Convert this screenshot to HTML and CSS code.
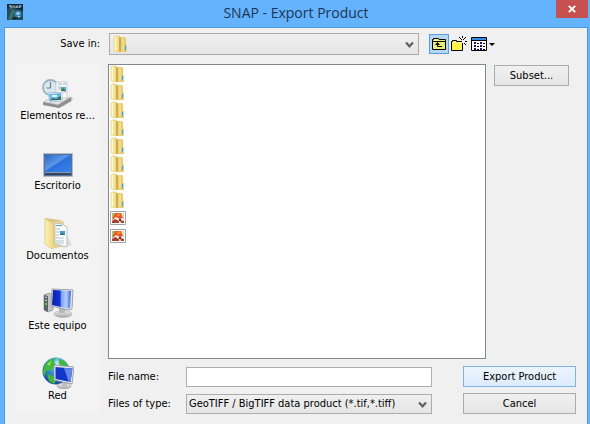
FILE: index.html
```html
<!DOCTYPE html>
<html lang="en">
<head>
<meta charset="utf-8">
<meta name="viewport" content="width=device-width, initial-scale=1">
<title>SNAP - Export Product</title>
<link rel="stylesheet" href="styles.css">
</head>
<body>
<svg class="defs" aria-hidden="true">
  <defs>
    <linearGradient id="gFold" x1="0" x2="1"><stop offset="0" stop-color="#c9a850"/><stop offset=".35" stop-color="#e9d27c"/><stop offset="1" stop-color="#e6cb66"/></linearGradient>
    <linearGradient id="gFlap" x1="0" x2="1"><stop offset="0" stop-color="#fdf3b8"/><stop offset="1" stop-color="#ecd47a"/></linearGradient>
    <linearGradient id="gDesk" x1="0" y1="0" x2="1" y2="1"><stop offset="0" stop-color="#2b68c8"/><stop offset=".45" stop-color="#5b98ea"/><stop offset=".5" stop-color="#2c70dc"/><stop offset="1" stop-color="#3a82ec"/></linearGradient>
    <linearGradient id="gScreen" x1="0" x2="1"><stop offset="0" stop-color="#0a1fa8"/><stop offset=".42" stop-color="#1233d8"/><stop offset=".5" stop-color="#7da2f2"/><stop offset=".75" stop-color="#b9cffa"/><stop offset="1" stop-color="#3462dc"/></linearGradient>
    <linearGradient id="gMetal" x1="0" y1="0" x2="0" y2="1"><stop offset="0" stop-color="#f2f3f3"/><stop offset="1" stop-color="#a0a5a8"/></linearGradient>
    <radialGradient id="gGlobe" cx=".55" cy=".25" r=".8"><stop offset="0" stop-color="#c8f2ff"/><stop offset=".35" stop-color="#3fa0e0"/><stop offset="1" stop-color="#123a94"/></radialGradient>
    <symbol id="folder" viewBox="0 0 16 18">
      <path d="M6 2h6l1 1v13l-1 1H6z" fill="url(#gFold)"/>
      <path d="M1 2l1-1h4l1 1v14l-1 1-5-1z" fill="url(#gFlap)" stroke="#e3ca74" stroke-width=".6"/>
      <path d="M6 2l2 1v13l-2 1z" fill="#cbaa50"/>
      <path d="M2 2h1v13H2z" fill="#fffad2"/>
      <path d="M9 3h2v12H9z" fill="#f0dc8c"/>
      <path d="M11 10h3v6l-1 1h-2z" fill="#e3c765"/>
      <path d="M12 11h1v4h-1z" fill="#3f9fe0"/>
      <path d="M13 11h1v4h-1z" fill="#b9dcef"/>
    </symbol>
    <symbol id="image" viewBox="0 0 16 14">
      <path d="M.5.500h15v13H.5z" fill="#fff" stroke="#a3a3a8"/>
      <path d="M2 2h12v10H2z" fill="#f1eadc"/>
      <path d="M2 2h5L2 9z" fill="#a7c36c"/>
      <path d="M5 2h6l2 5-3 1-4-2-4 3z" fill="#e9502e"/>
      <path d="M6 4l3-2 2 2-3 2z" fill="#f98b25"/>
      <path d="M2 10l3-2 4 2v2H2zM10 9l4 1v2h-3z" fill="#a8402f"/>
      <path d="M9 8h2v2H9z" fill="#6c2c25"/>
      <path d="M12 2h2v6h-1z" fill="#d4dcc0"/>
    </symbol>
    <symbol id="chevron" viewBox="0 0 9 8"><path d="M1 1.500l3.500 3.800L8 1.500" fill="none" stroke="#606060" stroke-width="2.200"/></symbol>
  </defs>
</svg>
<div class="dialog">
  <header class="titlebar">
    <svg class="app-icon" viewBox="0 0 16 16" aria-hidden="true">
      <path d="M0 0h16v16H0z" fill="#122b3c"/>
      <path d="M0 5l7-1 9 3v9H0z" fill="#234e5d"/>
      <path d="M1 15L5 5l3 1-3 10z" fill="#3c7162"/>
      <circle cx="11" cy="10" r="3.500" fill="#3682bb"/>
      <path d="M9 9l3-1 1 2-3 1zM11 12h2v1h-2z" fill="#b5d9e7"/>
      <path d="M5 14l4-1 2 2H5z" fill="#10202e"/>
      <path d="M4.500 1.500h-2v1h2v1.500h-2M6 4V1.500L8 4V1.500M9.500 4V2h1.500v2M9.500 3H11M12.500 4V1.500h1.500V3h-1.500" fill="none" stroke="#a9c2cc" stroke-width=".8"/>
    </svg>
    <h1 class="title">SNAP - Export Product</h1>
    <button class="close" type="button" aria-label="Close">
      <svg class="close-icon" viewBox="0 0 8 8" aria-hidden="true"><path d="M.8.800l6.400 6.400M7.200.800L.8 7.200" stroke="#fff" stroke-width="1.900"/></svg>
    </button>
  </header>
  <main class="content">
    <div class="location">
      <label class="location-label" for="dir">Save in:</label>
      <div class="combo combo-dir">
        <select id="dir"><option value=""></option></select>
        <svg class="combo-folder" aria-hidden="true"><use href="#folder"/></svg>
        <svg class="chevron" aria-hidden="true"><use href="#chevron"/></svg>
      </div>
      <div class="tools">
        <button class="tool tool-active" type="button" aria-label="Up one level">
          <svg class="tool-icon" viewBox="0 0 16 16" aria-hidden="true">
            <path d="M1.500 13.500v-10h1v-1h5v1h7v10z" fill="#e9ee72" stroke="#000"/>
            <path d="M2 5.500h12" stroke="#000"/><path d="M3 4h5" stroke="#fffbc0"/>
            <path d="M6.500 7v3.500H11" fill="none" stroke="#000"/><path d="M4 9l2.500-3L9 9z"/>
          </svg>
        </button>
        <button class="tool" type="button" aria-label="Create new folder">
          <svg class="tool-icon" viewBox="0 0 16 16" aria-hidden="true">
            <path d="M.5 14.500v-9h1v-1h4v1h6v9z" fill="#fdf543" stroke="#000"/>
            <path d="M1 7h10" stroke="#fffcae"/>
            <path d="M11 3h3v4h-3z" fill="#f0f0f0"/>
            <path d="M9 5.500H7M16 5.500h-2M11.500 0v2M11.500 7v3M8 1.500h1M9 2.500h1M14 1.500h1M13 2.500h1M13 7.500h1M14 8.500h1M10 3.500h1M12 3.500h1" stroke="#000"/>
          </svg>
        </button>
        <button class="tool tool-menu" type="button" aria-label="View menu">
          <svg class="view-icon" viewBox="0 0 24 16" aria-hidden="true">
            <path d="M.5 1.500h15v13H.5z" fill="#fff" stroke="#000"/><path d="M1 2h14v2H1z" fill="#2f8dec"/><path d="M1 4.500h14" stroke="#000"/>
            <path d="M3 6h2v2H3zM3 9h2v2H3zM3 12h2v2H3zM9 6h2v2H9zM9 9h2v2H9zM9 12h2v2H9z" fill="#17176b"/>
            <path d="M6 7.500h2M6 10.500h2M6 13.500h2M12 7.500h2M12 10.500h2M12 13.500h2" stroke="#000"/>
            <path d="M18 7h6l-3 3z"/>
          </svg>
        </button>
      </div>
    </div>
    <div class="columns">
      <nav class="places" aria-label="Places">
        <button class="place" type="button">
          <svg class="place-icon" viewBox="0 0 32 32" aria-hidden="true">
            <path d="M14 28l16-8 2 2-11 8z" fill="#dcdcdc"/>
            <path d="M1 25l10-6 19 1v4L17 31 1 28z" fill="#c5c7c6"/>
            <path d="M1 25l15 3 13-8v4l-12 7-16-3z" fill="#8d9090"/>
            <path d="M3 25l10-6 15 1-12 7z" fill="#e7e8e7"/>
            <circle cx="8.500" cy="10.500" r="7.500" fill="#d8e8f0" stroke="#9fb2bf" stroke-width="1.800"/>
            <path d="M8.500 5v6h-4" fill="none" stroke="#688293" stroke-width="1.200"/>
            <path d="M14 5h11v16H14z" fill="#fafafa" stroke="#b6bbbc" stroke-width=".7"/>
            <path d="M16 7h4M21 7h3M16 10h3M16 12h3M21 15h3" stroke="#9fabae"/>
            <path d="M19 10h5v4h-5z" fill="#54a5ce"/><path d="M19 13l2-2 3 3h-5z" fill="#3b7b4c"/>
            <path d="M6 16l14-1v9l-12 1z" fill="#fff" stroke="#91aabd" stroke-width=".7"/>
            <path d="M7 17l12-1v7L8 24z" fill="#69b4ec"/><path d="M8 23l3-2 3 1 5-3v4z" fill="#327451"/><path d="M10 19h5" stroke="#e5f6ff" stroke-width="2"/>
          </svg>
          <span class="place-name">Elementos re...</span>
        </button>
        <button class="place" type="button">
          <svg class="place-icon" viewBox="0 0 32 32" aria-hidden="true">
            <path d="M1.500 6.500h29v23h-29z" fill="#56729b" stroke="#b4bac3"/>
            <path d="M3 8h26v17H3z" fill="url(#gDesk)"/><path d="M3 25h26v3H3z" fill="#35445a"/><path d="M3 25.500h26" stroke="#8c9db1"/>
          </svg>
          <span class="place-name">Escritorio</span>
        </button>
        <button class="place" type="button">
          <svg class="place-icon" viewBox="0 0 32 32" aria-hidden="true">
            <path d="M20 31l10-3-5-10z" fill="#dedede"/>
            <path d="M3 1l15 2 4 2v24l-9 2z" fill="#dcc57e"/>
            <path d="M9 5l11-1 2 2v22l-10 2z" fill="#e7d89d"/>
            <path d="M13 6l7 1 5 3v20l-12-3z" fill="#f7fbfc" stroke="#a7b2b8" stroke-width=".7"/>
            <path d="M14 8h6v1h-6z" fill="#55a2b2"/>
            <path d="M14 12h4M14 15h3M14 18h3M14 21h8M14 24h8M14 26h8" stroke="#b3c5ce"/>
            <path d="M18 14h5v4h-5z" fill="#4c99c8"/><path d="M18 18l2-2 3 2z" fill="#326b52"/>
            <path d="M3 2l8 4 1 25-2 1-7-5z" fill="url(#gFlap)" stroke="#ddc570" stroke-width=".7"/>
          </svg>
          <span class="place-name">Documentos</span>
        </button>
        <button class="place" type="button">
          <svg class="place-icon" viewBox="0 0 32 32" aria-hidden="true">
            <path d="M2 8l5-2 4 2v15l-5 2-4-2z" fill="#bfc3c5" stroke="#858b8e" stroke-width=".7"/>
            <path d="M2 8l4 1v16l-4-2z" fill="#5c6365"/><path d="M3 10l2 .5M3 13l2 .5" stroke="#d6dbdd"/><path d="M3 16h2v2H3z" fill="#57d53d"/>
            <ellipse cx="21" cy="27" rx="9" ry="3.500" fill="url(#gMetal)" stroke="#b1b4b6" stroke-width=".7"/>
            <path d="M17 20h6v6h-6z" fill="#b3b8bb"/>
            <path d="M10 2l21 1-1 19-4 1-17-4z" fill="#e4e6e8" stroke="#898f98" stroke-width=".8"/>
            <path d="M11 3l18 1-1 17-3 .5L10 18z" fill="url(#gScreen)"/>
          </svg>
          <span class="place-name">Este equipo</span>
        </button>
        <button class="place" type="button">
          <svg class="place-icon" viewBox="0 0 32 32" aria-hidden="true">
            <circle cx="14" cy="14" r="13.500" fill="url(#gGlobe)"/>
            <path d="M2 9l5-6 7-2-2 4 2 3-5 5-5 1-1 5-2-3zM17 2l6 2 3 5-5 1-4-3zM5 17l6 2 3 5-2 3-5-3z" fill="#43b83d"/>
            <path d="M5 7l4-3-1 5z" fill="#93e361"/>
            <ellipse cx="22" cy="29" rx="7" ry="3" fill="url(#gMetal)" stroke="#a5a9ad" stroke-width=".6"/>
            <path d="M20 24h5v5h-5z" fill="#bdc1c4"/>
            <path d="M12 8l20 2-2 17-18-4z" fill="#e8eaec" stroke="#8a9098" stroke-width=".8"/>
            <path d="M13.500 10l17 1.500-2 13.500-15-3z" fill="#1237c8"/><path d="M22 11l8.500.5-2 13.500-2-.5z" fill="#5f88e8"/>
          </svg>
          <span class="place-name">Red</span>
        </button>
      </nav>
      <div class="main">
        <div class="browser">
          <ul class="files" aria-label="Files">
            <li class="file"><svg class="file-icon" aria-hidden="true"><use href="#folder"/></svg></li>
            <li class="file"><svg class="file-icon" aria-hidden="true"><use href="#folder"/></svg></li>
            <li class="file"><svg class="file-icon" aria-hidden="true"><use href="#folder"/></svg></li>
            <li class="file"><svg class="file-icon" aria-hidden="true"><use href="#folder"/></svg></li>
            <li class="file"><svg class="file-icon" aria-hidden="true"><use href="#folder"/></svg></li>
            <li class="file"><svg class="file-icon" aria-hidden="true"><use href="#folder"/></svg></li>
            <li class="file"><svg class="file-icon" aria-hidden="true"><use href="#folder"/></svg></li>
            <li class="file"><svg class="file-icon" aria-hidden="true"><use href="#folder"/></svg></li>
            <li class="file"><svg class="file-image" aria-hidden="true"><use href="#image"/></svg></li>
            <li class="file"><svg class="file-image" aria-hidden="true"><use href="#image"/></svg></li>
          </ul>
          <div class="side"><button class="btn" type="button">Subset...</button></div>
        </div>
        <form class="form">
          <label for="name">File name:</label>
          <input class="name" id="name" type="text">
          <button class="btn btn-primary" type="button">Export Product</button>
          <label for="type">Files of type:</label>
          <div class="combo combo-type">
            <select id="type"><option>GeoTIFF / BigTIFF data product (*.tif,*.tiff)</option></select>
            <svg class="chevron" aria-hidden="true"><use href="#chevron"/></svg>
          </div>
          <button class="btn" type="button">Cancel</button>
        </form>
      </div>
    </div>
  </main>
</div>
</body>
</html>
```
FILE: styles.css
```css
* { box-sizing: border-box; }

body {
  margin: 0;
  color: #000;
  font: 11px/14px Tahoma, "DejaVu Sans Condensed", "Noto Sans", sans-serif;
}

button, input, select {
  margin: 0;
  padding: 0;
  border: 0;
  border-radius: 0;
  background: none;
  color: inherit;
  font: inherit;
}

svg { display: block; }
.defs { position: absolute; width: 0; height: 0; }

.dialog {
  display: flex;
  flex-direction: column;
  min-height: 100vh;
  padding: 0 2px 0 4px;
  background: #64b3ff;
}

.titlebar {
  display: grid;
  grid-template-columns: 32px 1fr 32px;
  align-items: start;
  height: 27px;
}
.app-icon { width: 16px; height: 16px; margin: 4px 3px; }
.title {
  margin: 0;
  color: #1c3550;
  font: 14px/26px "Open Sans", sans-serif;
  text-align: center;
}
.close { display: grid; place-items: center; height: 18px; background: #c75050; }
.close-icon { width: 8px; height: 8px; }

.content {
  display: flex;
  flex: 1;
  flex-direction: column;
  gap: 9px;
  padding: 5px 11px 10px 10px;
  border: 1px solid #4d97dc;
  border-bottom: 0;
  background: #f0f0f0;
}

.location { display: flex; align-items: center; height: 22px; }
.location-label { width: 85px; margin-right: 9px; text-align: right; }

.combo {
  position: relative;
  border: 1px solid #acacac;
  background: linear-gradient(#f0f0f0, #e5e5e5);
}
.combo select { width: 100%; height: 100%; padding: 0 20px 0 2px; appearance: none; }
.combo-dir { flex: 1; height: 22px; max-width: 50vw; min-width: 310px; }
.combo-type { height: 20px; }
.combo-folder { position: absolute; top: 1px; left: 3px; width: 16px; height: 18px; pointer-events: none; }
.chevron { position: absolute; top: 50%; right: 4px; width: 9px; height: 8px; margin-top: -3px; pointer-events: none; }

.tools { display: flex; align-items: center; gap: 2px; margin-left: 10px; }
.tool { display: grid; place-items: center; height: 20px; }
.tool-active { width: 20px; border: 1px solid #569de5; background: #b5d6f3; }
.tool-menu { margin-left: 2px; }
.tool-icon { width: 16px; height: 16px; }
.view-icon { width: 24px; height: 16px; }

.columns { display: flex; flex: 1; gap: 8px; }
.places {
  display: flex;
  flex: none;
  flex-direction: column;
  gap: 24px;
  width: 85px;
  padding-top: 13px;
  background: #f3f3f3;
}
.place { display: flex; flex-direction: column; align-items: center; }
.place-icon { width: 32px; height: 32px; }
.place-name { white-space: nowrap; }

.main { display: flex; flex: 1; flex-direction: column; gap: 7px; }
.browser { display: flex; flex: 1; gap: 8px; }
.files {
  flex: 1;
  margin: 0;
  padding: 0 1px;
  border: 1px solid #828790;
  background: #fff;
  list-style: none;
}
.file { display: flex; align-items: center; height: 18px; }
.file-icon { width: 16px; height: 18px; }
.file-image { width: 16px; height: 14px; }
.side { width: 82px; padding: 1px 7px 0 0; }
.side .btn { width: 100%; }

.form {
  display: grid;
  grid-template-columns: 78px 1fr 113px;
  row-gap: 6px;
  align-items: center;
}
.name { height: 20px; padding: 0 3px; border: 1px solid #abadb3; background: #fff; }
.name, .combo-type { margin-right: 31px; }

.btn {
  height: 21px;
  border: 1px solid #acacac;
  background: linear-gradient(#f0f0f0, #e5e5e5);
}
.btn-primary { border-color: #7eb4ea; background: linear-gradient(#ecf4fc, #dcecfc); }
```
